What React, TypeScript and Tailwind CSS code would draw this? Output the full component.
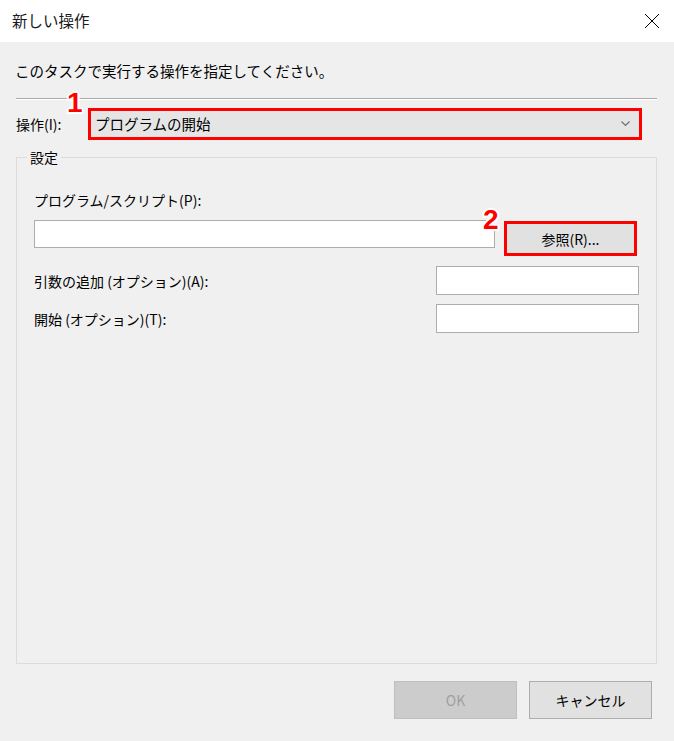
import React from "react";

const font = { fontFamily: '"Noto Sans CJK JP", "Noto Sans", sans-serif' };

function Badge({ n, className }: { n: string; className: string }) {
  return (
    <span
      className={
        "absolute text-[28px] leading-none font-bold text-[#ff0000] [font-family:'Liberation_Sans',Arial,sans-serif] [text-shadow:2px_0_0_#fff,-2px_0_0_#fff,0_2px_0_#fff,0_-2px_0_#fff,1.5px_1.5px_0_#fff,-1.5px_-1.5px_0_#fff,1.5px_-1.5px_0_#fff,-1.5px_1.5px_0_#fff] " +
        className
      }
    >
      {n}
    </span>
  );
}

export default function App() {
  return (
    <div
      className="relative w-[674px] h-[741px] flex flex-col bg-[#f0f0f0] text-black overflow-hidden"
      style={font}
    >
      {/* Title bar */}
      <div className="h-[42px] bg-white flex items-center justify-between pl-[12px] pr-[14px] shrink-0">
        <span className="text-[15.5px] leading-none text-[#1a1a1a]">新しい操作</span>
        <svg width="16" height="16" viewBox="0 0 16 16" className="block">
          <path d="M1 1 L15 15 M15 1 L1 15" stroke="#000" strokeWidth="1" fill="none" />
        </svg>
      </div>

      {/* Body */}
      <div className="flex-1 flex flex-col px-[16px]">
        <div className="mt-[19px] h-[20px] text-[14.5px] leading-[20px] ml-[-1px]">
          このタスクで実行する操作を指定してください。
        </div>

        {/* separator */}
        <div className="mt-[17px] w-[641px] h-[2px] border-t border-t-[#a9a9a9] border-b border-b-white" />

        {/* Action row */}
        <div className="mt-[8px] h-[32px] flex items-center">
          <span className="w-[72px] text-[14px] leading-[20px]">操作(I):</span>
          <div className="w-[554px] h-[32px] border-[3px] border-[#ff0000] bg-[#e5e5e5] flex items-center justify-between pl-[4px] pr-[9px]">
            <span className="text-[14.5px] leading-[20px]">プログラムの開始</span>
            <svg width="9" height="6" viewBox="0 0 9 6" className="block">
              <path d="M0.5 0.5 L4.5 4.5 L8.5 0.5" stroke="#707070" strokeWidth="1.2" fill="none" />
            </svg>
          </div>
        </div>

        {/* Group box */}
        <div className="relative mt-[17px] w-[641px] h-[507px] border border-[#dcdcdc] flex flex-col pl-[17px] pt-[32px]">
          <span className="absolute left-[10px] top-[-11px] px-[3px] bg-[#f0f0f0] text-[14px] leading-[20px]">
            設定
          </span>
          <div className="h-[20px] text-[14px] leading-[20px]">プログラム/スクリプト(P):</div>
          <div className="mt-[10px] flex items-start">
            <div className="w-[461px] h-[28px] bg-white border border-[#adadad]" />
            <div className="ml-[9px] mt-[1px] w-[133px] h-[35px] border-[3px] border-[#ff0000] bg-[#e1e1e1] flex items-center justify-center">
              <span className="text-[14px] leading-[20px]">参照(R)...</span>
            </div>
          </div>
          <div className="mt-[10px] flex items-center justify-between w-[605px]">
            <span className="text-[14px] leading-[20px]">引数の追加 (オプション)(A):</span>
            <div className="w-[203px] h-[29px] bg-white border border-[#adadad]" />
          </div>
          <div className="mt-[9px] flex items-center justify-between w-[605px]">
            <span className="text-[14px] leading-[20px]">開始 (オプション)(T):</span>
            <div className="w-[203px] h-[29px] bg-white border border-[#adadad]" />
          </div>
        </div>

        {/* Buttons */}
        <div className="mt-[17px] flex justify-end pr-[6px] gap-[12px]">
          <div className="w-[123px] h-[38px] bg-[#cccccc] border border-[#bfbfbf] flex items-center justify-center">
            <span className="text-[14px] leading-[20px] text-[#a0a0a0]">OK</span>
          </div>
          <div className="w-[123px] h-[38px] bg-[#e1e1e1] border border-[#adadad] flex items-center justify-center">
            <span className="text-[14px] leading-[20px]">キャンセル</span>
          </div>
        </div>
      </div>

      <Badge n="1" className="left-[67px] top-[89px]" />
      <Badge n="2" className="left-[483px] top-[206px]" />
    </div>
  );
}
